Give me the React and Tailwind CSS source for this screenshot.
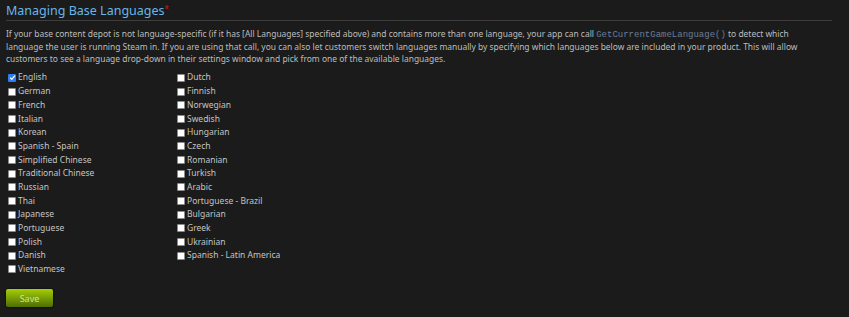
import React, { useState } from "react";

const leftLangs = [
  "English",
  "German",
  "French",
  "Italian",
  "Korean",
  "Spanish - Spain",
  "Simplified Chinese",
  "Traditional Chinese",
  "Russian",
  "Thai",
  "Japanese",
  "Portuguese",
  "Polish",
  "Danish",
  "Vietnamese",
];

const rightLangs = [
  "Dutch",
  "Finnish",
  "Norwegian",
  "Swedish",
  "Hungarian",
  "Czech",
  "Romanian",
  "Turkish",
  "Arabic",
  "Portuguese - Brazil",
  "Bulgarian",
  "Greek",
  "Ukrainian",
  "Spanish - Latin America",
];

const LangBox = ({ label, checked, onToggle }) => (
  <label className="flex items-center h-[13.7px] cursor-pointer select-none">
    <span
      onClick={onToggle}
      className={
        checked
          ? "w-[8px] h-[8px] rounded-[1px] bg-[#2d7cf0] flex items-center justify-center shrink-0"
          : "w-[8px] h-[8px] rounded-[1px] bg-white border border-[#8c8c8c] shrink-0"
      }
    >
      {checked && (
        <svg viewBox="0 0 10 10" className="w-[7px] h-[7px]">
          <path d="M1.5 5.2 L4 7.6 L8.5 2.2" fill="none" stroke="white" strokeWidth="1.8" />
        </svg>
      )}
    </span>
    <span className="ml-[2px] text-[8.5px] text-[#c4c4c4]">{label}</span>
  </label>
);

export default function App() {
  const [checked, setChecked] = useState({ English: true });

  const toggle = (name) => setChecked((c) => ({ ...c, [name]: !c[name] }));

  return (
    <div
      className="w-[849px] h-[317px] bg-[#1b1b1b] px-[6px] pt-[3px] overflow-hidden"
      style={{ fontFamily: '"Noto Sans", "Open Sans", Arial, sans-serif' }}
    >
      <h2 className="text-[12.5px] leading-[16px] text-[#67b7eb] border-b border-[#3d3d3d] mr-[11px] pb-[1px]">
        Managing Base Languages
        <sup className="text-[#c02222] text-[8px] relative top-[-3px]">*</sup>
      </h2>

      <p className="mt-[7px] text-[8.45px] leading-[12px] text-[#bdbdbd] w-[820px]">
        If your base content depot is not language-specific (if it has [All Languages] specified
        above) and contains more than one language, your app can call{" "}
        <code
          className="text-[#6a7d9c] text-[9px]"
          style={{ fontFamily: '"Liberation Mono", "DejaVu Sans Mono", monospace' }}
        >
          GetCurrentGameLanguage()
        </code>{" "}
        to detect which language the user is running Steam in. If you are using that call, you can
        also let customers switch languages manually by specifying which languages below are
        included in your product. This will allow customers to see a language drop-down in their
        settings window and pick from one of the available languages.
      </p>

      <div className="flex mt-[6px] pl-[2px]">
        <div className="w-[169px] flex flex-col">
          {leftLangs.map((l) => (
            <LangBox key={l} label={l} checked={!!checked[l]} onToggle={() => toggle(l)} />
          ))}
        </div>
        <div className="flex flex-col">
          {rightLangs.map((l) => (
            <LangBox key={l} label={l} checked={!!checked[l]} onToggle={() => toggle(l)} />
          ))}
        </div>
      </div>

      <button className="mt-[13px] w-[47px] h-[18px] rounded-[2px] bg-gradient-to-b from-[#a4d007] to-[#4f6d04] text-[9px] text-[#d2e885] shadow-[0_0_2px_#000] block">
        Save
      </button>
    </div>
  );
}
